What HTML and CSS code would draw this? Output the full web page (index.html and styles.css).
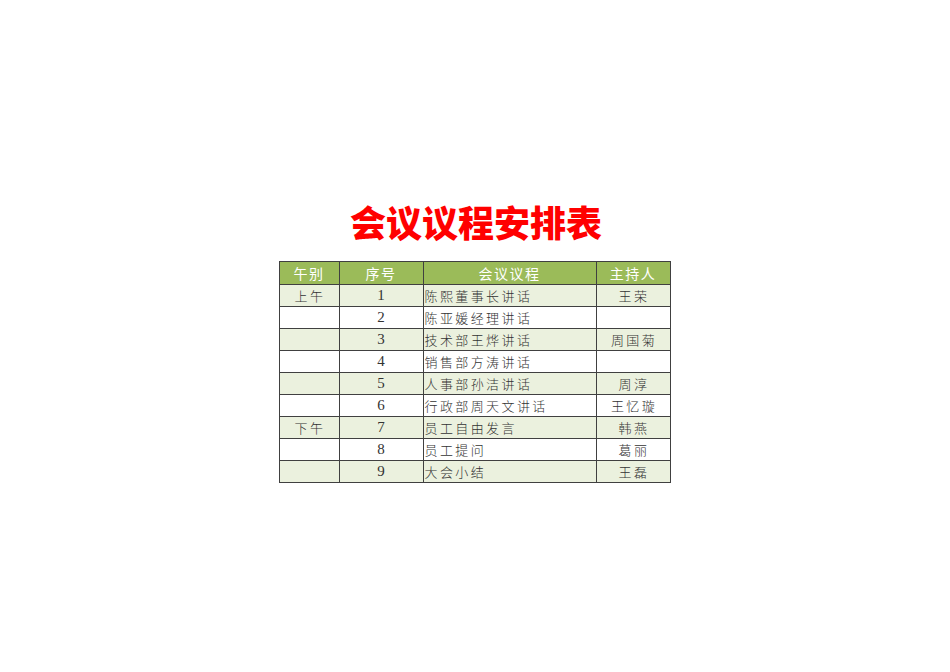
FILE: index.html
```html
<!DOCTYPE html>
<html lang="zh-CN">
<head>
<meta charset="utf-8">
<title>会议议程安排表</title>
<link rel="stylesheet" href="styles.css">
</head>
<body>
<main class="page">
  <h1 class="title">会议议程安排表</h1>
  <table class="agenda">
    <colgroup>
      <col class="c-period">
      <col class="c-no">
      <col class="c-item">
      <col class="c-host">
    </colgroup>
    <thead>
      <tr><th>午别</th><th>序号</th><th>会议议程</th><th>主持人</th></tr>
    </thead>
    <tbody>
      <tr class="alt"><td class="ctr">上午</td><td class="num">1</td><td class="item">陈熙董事长讲话</td><td class="ctr">王荣</td></tr>
      <tr><td></td><td class="num">2</td><td class="item">陈亚媛经理讲话</td><td></td></tr>
      <tr class="alt"><td></td><td class="num">3</td><td class="item">技术部王烨讲话</td><td class="ctr">周国菊</td></tr>
      <tr><td></td><td class="num">4</td><td class="item">销售部方涛讲话</td><td></td></tr>
      <tr class="alt"><td></td><td class="num">5</td><td class="item">人事部孙洁讲话</td><td class="ctr">周淳</td></tr>
      <tr><td></td><td class="num">6</td><td class="item">行政部周天文讲话</td><td class="ctr">王忆璇</td></tr>
      <tr class="alt"><td class="ctr">下午</td><td class="num">7</td><td class="item">员工自由发言</td><td class="ctr">韩燕</td></tr>
      <tr><td></td><td class="num">8</td><td class="item">员工提问</td><td class="ctr">葛丽</td></tr>
      <tr class="alt"><td></td><td class="num">9</td><td class="item">大会小结</td><td class="ctr">王磊</td></tr>
    </tbody>
  </table>
</main>
</body>
</html>
```

FILE: styles.css
```css
html, body {
  margin: 0;
  padding: 0;
  background: #ffffff;
}

.page {
  display: flex;
  flex-direction: column;
  align-items: center;
  padding-top: 201px;
}

.title {
  margin: 0 0 0 2px;
  font-family: "Noto Sans CJK SC", "Noto Sans", sans-serif;
  font-weight: 900;
  font-size: 36px;
  line-height: 40px;
  color: #ff0000;
  letter-spacing: 0;
}

.agenda {
  margin-top: 20px;
  margin-right: 1px;
  border-collapse: collapse;
  table-layout: fixed;
  width: 391px;
  font-family: "Noto Sans CJK SC", sans-serif;
  font-weight: 300;
  font-size: 13px;
  color: #333333;
}

.c-period { width: 60px; }
.c-no { width: 84px; }
.c-item { width: 173px; }
.c-host { width: 74px; }

.agenda th,
.agenda td {
  border: 1px solid #404040;
  padding: 0;
  white-space: nowrap;
  overflow: hidden;
}

.agenda th {
  height: 22px;
  background: #9bbb59;
  color: #ffffff;
  font-weight: normal;
  font-size: 14px;
  letter-spacing: 1.5px;
  text-align: center;
}

.agenda td {
  height: 21px;
  line-height: 21px;
  letter-spacing: 2.4px;
}

.agenda tr.alt td {
  background: #ebf1de;
}

.agenda td.ctr {
  text-align: center;
  padding-left: 2px;
}

.agenda td.num {
  text-align: center;
  font-family: "Liberation Serif", serif;
  font-weight: normal;
  font-size: 15px;
  letter-spacing: 0;
  color: #333333;
}

.agenda td.item {
  text-align: left;
  padding-left: 1px;
}
```
